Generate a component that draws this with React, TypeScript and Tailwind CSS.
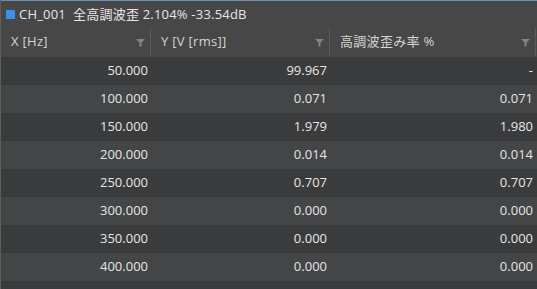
const rows: [string, string, string][] = [
  ["50.000", "99.967", "-"],
  ["100.000", "0.071", "0.071"],
  ["150.000", "1.979", "1.980"],
  ["200.000", "0.014", "0.014"],
  ["250.000", "0.707", "0.707"],
  ["300.000", "0.000", "0.000"],
  ["350.000", "0.000", "0.000"],
  ["400.000", "0.000", "0.000"],
];

function Funnel() {
  return (
    <svg width="9" height="9" viewBox="0 0 9 9" className="shrink-0">
      <path d="M0 1 H9 L5.5 4.5 V8.5 H3.5 V4.5 Z" fill="#858585" />
    </svg>
  );
}

function HeaderCell({ label, width }: { label: string; width: string }) {
  return (
    <div className={`flex h-full items-center justify-between pl-[10px] ${width}`}>
      <span>{label}</span>
      <div className="flex items-center gap-[5px]">
        <Funnel />
        <div className="h-[28px] w-px bg-[#5c5c5c]" />
      </div>
    </div>
  );
}

export default function App() {
  return (
    <div
      className="h-[289px] w-[537px] overflow-hidden border-l border-[#5e5e5e] bg-[#3a3b3c] text-[13px] text-[#e6e6e6]"
      style={{ fontFamily: '"Open Sans", "Noto Sans CJK JP", sans-serif' }}
    >
      {/* title */}
      <div className="flex h-[27px] items-center gap-[4px] border-t border-[#6f8fb8] bg-[#474747] pl-[5px]">
        <div className="h-[9px] w-[9px] bg-[#3b8eea]" />
        <span className="leading-none tracking-[0.2px]">CH_001&nbsp;&nbsp;全高調波歪 2.104% -33.54dB</span>
      </div>

      {/* header */}
      <div className="flex h-[30px] items-center bg-[#474747] text-[#d4d4d4] tracking-[0.3px]">
        <HeaderCell label="X [Hz]" width="w-[150px]" />
        <HeaderCell label="Y [V [rms]]" width="w-[179px]" />
        <HeaderCell label="高調波歪み率 %" width="w-[206px]" />
      </div>

      {/* rows */}
      {rows.map((r, i) => (
        <div
          key={r[0]}
          className={`flex h-[28px] items-center ${i % 2 === 0 ? "bg-[#3a3b3c]" : "bg-[#434546]"}`}
        >
          <div className="w-[150px] pr-[3px] text-right">{r[0]}</div>
          <div className="w-[179px] pr-[3px] text-right">{r[1]}</div>
          <div className="flex-1 pr-[4px] text-right">{r[2]}</div>
        </div>
      ))}
    </div>
  );
}
